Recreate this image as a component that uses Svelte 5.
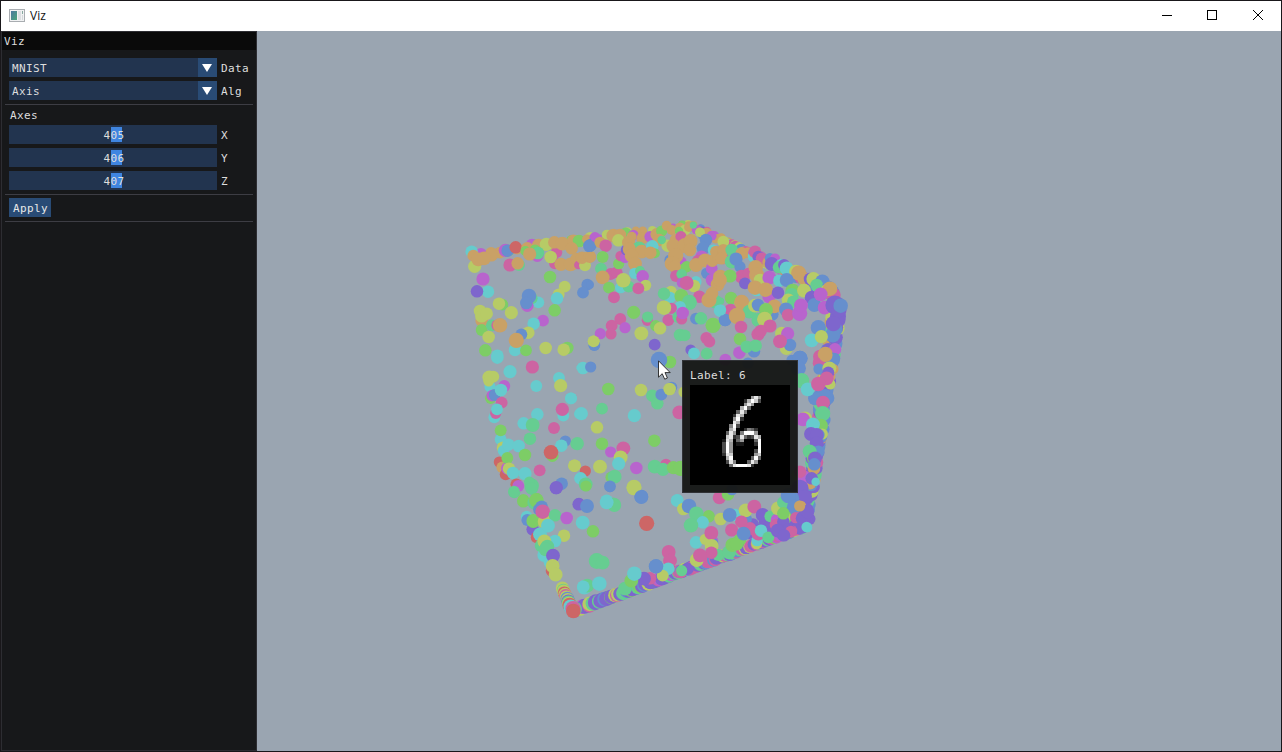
<script>
  const colors = {
    o: '#c9a166', t: '#66cbcd', y: '#b7cb66', p: '#cc64a2', m: '#b864cd',
    v: '#7e66cd', b: '#668fcd', g: '#7dcd66', e: '#66cd91', r: '#cd6666'
  };

  let seed = 17;
  function random() {
    seed = (seed * 16807) % 2147483647;
    return seed / 2147483647;
  }

  // Points crowded along one edge of the cube, farthest first.
  function edge(x1, y1, r1, x2, y2, r2, count, jx, jy, palette) {
    return Array.from({ length: count }, (_, i) => {
      const t = i / (count - 1);
      return {
        x: x1 + (x2 - x1) * t + (random() - 0.5) * jx,
        y: y1 + (y2 - y1) * t + (random() - 0.5) * jy,
        r: r1 + (r2 - r1) * t,
        c: colors[palette[Math.floor(random() * palette.length)]]
      };
    });
  }

  const edges = [
    ...edge(690, 225, 4, 482, 254, 6, 24, 4, 4, 'oomgy'),
    ...edge(688, 225, 4, 834, 293, 7.5, 85, 4, 4, 'oympbtpmoev'),
    ...edge(806, 518, 6, 836, 316, 8, 80, 7, 3, 'vvbbvvpbvvoeyb'),
    // Seen end-on, the bottom edge is a stack of discs that hide one another towards the right.
    ...edge(573, 610.5, 7.5, 804, 527, 6, 118, 2, 1, 'vvepvympevvpegvyb').reverse().reverse(),
    ...edge(745, 534, 6, 803, 512, 6, 34, 12, 16, 'vvvbvpvev')
  ];

  // Each cluster is measured on a grid three times finer than the view.
  const clusters = [
    { x: 460, y: 215, dots: `
      t35,110,18 y44,154,19 o40,122,17 o55,133,20 o94,120,19 o72,130,20 m136,106,19 b143,107,18 r167,97,18
      m216,90,18 o202,100,18 m232,122,18 o236,92,20 g225,105,16 g196,108,14 y259,88,19 e234,114,18 o209,117,19
      p150,150,19 e177,150,17 o173,145,18 p290,112,16 p285,145,17 o283,82,18 o307,86,20 o340,77,18 g357,78,18
      o335,100,18 y272,126,18 o303,148,19 o332,148,20 o350,132,18 p355,150,12 y375,151,17 o366,128,18 o389,125,18
      y390,68,16 o381,73,14 m405,68,16 b388,93,18 b405,80,14 o415,82,14 g270,186,18 b382,209,17 b369,233,17
      y314,215,17 y296,238,17 t291,250,18 g284,286,18 m69,192,19 t84,230,18 v51,229,18 t235,262,17 e215,250,17
      m202,272,18 b207,243,21 b199,264,18 g127,269,17 y117,266,18 y154,293,19 y60,288,18 o65,317,18 y65,303,19
      y80,296,18 g65,345,17 e96,331,17 p112,331,17 o120,331,21 y86,366,18 m249,317,17 t221,326,18 y205,353,18
      b184,358,17 t165,405,18 o169,376,22 g76,406,18 g198,406,17 t112,422,18 y257,399,18 g322,399,18 y311,404,18
      b403,390,17 y401,379,17` },
    { x: 590, y: 215, dots: `
      b2,90,18 m15,68,12 y50,60,14 g107,54,16 m130,60,15 m85,58,13 e92,70,15 o70,62,20 o90,60,18 y85,76,18
      o115,82,18 o125,65,14 o157,70,17 m180,65,16 o200,58,18 g215,48,16 o230,32,14 o207,75,18 o245,45,14 o270,38,15
      y285,45,16 g267,48,12 o297,36,14 m320,45,14 b338,60,14 e310,30,10 o350,55,16 m365,62,14 y330,52,14
      o30,82,16 p47,92,18 g38,126,17 e33,161,17 p62,177,17 p80,172,17 o2,126,15 g86,146,16 p92,123,15 m105,128,15
      v108,105,15 o116,82,18 e147,100,20 o118,102,19 o155,110,20 o125,122,20 t187,94,18 g195,115,14 o181,113,18
      y233,92,18 e215,75,12 o135,146,20 b240,135,16 m275,140,14 o258,75,18 p273,65,16 o250,92,20 o285,92,22
      o302,78,20 o257,122,22 o247,146,22 o300,105,18 g290,155,16 g280,162,15 m255,165,13 o254,155,18 p258,183,17
      e275,178,15 m275,203,14 t318,200,16 y312,213,18 p290,204,20 b348,75,18 b340,100,19 t370,105,16 m335,125,18
      p325,138,18 o318,150,20 o345,136,20 b350,175,16 m365,160,17 o367,137,18 o385,128,18 m400,130,17 o378,110,17
      m366,195,18 o391,186,21 o383,208,20 e376,260,20 p328,245,18 o357,255,22 o366,235,18 y400,80,17 o400,105,17
      t134,175,16 e150,168,14 m158,184,18 y167,211,16 t92,218,16 e116,215,17 p145,220,17 y100,196,21 o38,187,20
      g57,218,17 p72,247,17 b0,209,11 y243,230,17 t240,248,17 e222,236,18 g274,243,20 e298,262,22 t270,276,17
      p244,280,16 p235,315,17 e265,306,17 p275,312,16 y222,278,21 m278,294,18 b318,311,17 e333,310,18 g369,331,22
      b405,315,18 t390,287,18 g131,292,19 p172,316,16 e173,306,16 g197,332,16 y210,340,18 e270,360,18 e284,361,17
      p91,312,17 p65,332,17 p63,357,16 m105,338,16 y154,355,20 m31,356,16 b13,390,16 y11,379,17
      v194,389,17 p349,369,17 p358,380,17 v302,404,15 t312,415,17 e350,416,17` },
    { x: 720, y: 215, dots: `
      o5,130,18 e35,140,20 e35,105,18 o65,115,18 b60,155,16 b48,132,19 t100,125,16 o100,115,12 p105,110,18 v115,125,17
      p125,130,17 o145,142,17 b150,130,15 m165,130,14 v155,147,20 t185,150,18 e177,157,18 v192,150,17 t200,160,20
      y228,170,20 o236,174,22 o250,190,18 v270,192,18 y280,192,20 b307,200,21 e290,210,18 b325,215,18 y320,225,17
      o330,221,21 p65,185,20 p85,175,16 v75,205,17 t110,225,18 g30,183,19 o0,195,20 o107,157,21 o110,180,22 y120,195,18
      m148,188,20 t178,197,18 b200,195,20 g218,228,21 e215,240,20 y205,255,19 e220,260,18 o105,218,21 m147,245,19
      o137,224,21 v174,233,18 y252,227,20 v275,248,20 b283,270,20 m302,238,20 m314,278,20 v345,270,28 v357,285,22
      b362,272,21 g33,249,18 p32,285,18 e2,258,10 b16,315,18 t2,285,16 o65,262,22 e88,290,20 y105,272,20
      b114,270,18 b157,298,18 o163,274,20 g138,285,20 o51,303,24 e115,315,20 y134,313,22 p63,336,18 p150,333,19
      p114,358,19 p122,348,18 b198,283,20 p204,300,18 m239,295,22 m243,271,20 b345,343,22 v347,370,18
      b338,360,22 v340,326,22 b295,338,22 t275,376,20 y304,365,19 y185,355,19 m203,356,19 y199,400,19 b210,390,18 p180,379,20
      g60,372,18 m58,413,18 b102,409,18 e80,395,18 e107,392,18 m16,434,17 b84,444,16 b215,435,15 b240,430,22
      p300,425,20 p298,440,18 v325,405,20 m345,403,18 o316,418,22 b337,435,22` },
    { x: 460, y: 350, dots: `
      t150,65,19 t112,23,18 p217,51,19 t229,108,17 t297,84,17 y302,107,19 t333,145,17 t310,197,17 p307,178,19
      p282,234,17 t357,53,7 t357,192,14 t90,110,16 y88,82,20 y100,80,17 y86,94,15 m133,108,17 t112,125,17 g92,145,16
      m97,137,17 b104,135,17 t123,120,18 p125,158,17 t103,202,17 p107,190,16 t111,178,17 t232,193,18 t191,220,18
      e218,225,20 e210,266,18 t122,268,17 g122,241,17 y129,293,18 t130,302,16 t145,284,18 t176,288,18 g195,315,18
      r118,336,16 o127,352,17 r137,373,17 m142,355,18 g142,324,17 y147,356,18 t159,369,18 t195,371,19 p239,361,17
      e215,407,21 e208,395,15 e163,427,17 r169,403,17 m175,408,17 g190,450,17 g230,448,18 b316,273,16 t304,287,18
      g277,317,18 r273,307,21 y343,347,18 e348,282,16 t358,386,14 b305,401,18 v289,413,19` },
    { x: 570, y: 350, dots: `
      t39,54,18 b62,51,16 g300,36,18 b267,30,24 g115,117,18 y213,120,18 e247,137,18 e262,160,18 b274,134,17
      b305,112,16 y299,117,18 y342,126,16 p328,187,20 t3,145,17 t34,191,19 e96,176,17 t193,197,19 y81,232,18
      e22,281,19 g96,281,18 g253,272,18 m122,306,16 p160,295,20 y152,322,20 t146,341,19 m199,354,18 y14,347,18
      y90,350,20 r46,363,16 t32,385,18 e47,403,20 g124,382,17 e134,380,20 b120,409,17 y192,412,22 b214,440,20
      e254,350,20 p288,343,16 e279,358,19 g310,353,19 g332,355,22 t110,452,18 e130,460,17 v27,460,16 t322,451,18` },
    { x: 785, y: 355, dots: `
      b45,10,22 b40,40,22 p100,25,16 b102,42,16 b150,10,15 o145,42,15 y133,40,20 v130,52,17 o122,0,20 y136,88,15
      p125,70,20 b120,125,22 b90,130,20 e50,77,22 t68,103,20 p100,87,21 p114,143,20 b118,195,18 e113,176,22
      g108,212,20 y60,190,20 m54,193,20 t84,208,20 v78,237,20 y112,237,16 b100,240,18 v95,240,20 v95,265,20 b100,290,18
      e74,289,20 g85,310,18 p96,322,18 v90,310,20 o87,341,18 b88,328,18 y38,360,18 m58,368,20 p45,350,18 v80,370,18
      t92,380,12 v45,400,25 v60,425,20 b20,430,22 v65,465,20 o48,453,15 b20,460,20 g0,487,20 p40,487,16
      v68,485,16 t68,518,13 v45,515,22 p18,528,18` },
    { x: 500, y: 490, dots: `
      v168,-6,18 e42,5,17 e95,-4,18 g70,34,18 e103,38,20 g109,31,21 b118,58,18 b125,50,18 t80,80,17 v98,118,18
      b82,90,17 r110,142,17 g100,93,20 y135,95,21 p128,65,21 e165,76,18 m200,84,18 y192,137,18 t120,133,20
      t144,107,20 e125,167,20 t165,153,18 t133,195,20 y133,154,20 e142,170,20 e137,178,20 t150,217,18
      v159,197,20 r156,242,18 y158,228,20 y167,254,20 v236,43,18 b261,48,20 e343,45,20 t320,37,20 t248,98,20
      g279,124,18 e290,213,23 e308,218,20 r440,100,22 y401,-5,20 b424,21,20 b330,-8,14 g258,-12,16` },
    { x: 650, y: 485, dots: `
      p208,38,19 g234,28,18 b246,14,16 t81,47,18 y100,72,18 b117,63,21 g176,94,18 e139,86,21 t158,112,18 e123,121,21
      y212,102,18 t255,90,18 b239,90,20 b288,102,17 y287,76,20 p313,65,20 p274,110,18 p300,130,18 p245,135,19
      t138,172,18 m188,168,16 b190,174,14 y166,163,16 p184,144,20 y185,183,20 e205,210,17 p184,203,18 g270,164,18
      e237,202,20 g247,180,20 g260,176,20 b281,146,20 y320,176,16 t321,167,16 p325,146,20 t333,137,18 e355,157,17
      v338,90,20 e361,94,17 m380,104,17 p378,120,18 y384,70,20 e400,52,18 b415,32,22 b432,65,20 y405,95,16
      v400,110,18 p437,98,16 g400,85,18 v460,100,22 v472,80,20 o449,63,16 t470,126,15 v415,135,20 p423,140,17
      v383,137,20 v402,151,18 p56,201,20 p60,227,20 t55,251,18 y38,272,17 b18,244,21 p93,262,17 v113,251,18
      e95,257,16 y140,225,20 p150,211,20` },
    { x: 500, y: 490, dots: `
      t253,292,21 e262,287,20 t250,290,18 t298,281,21 p450,265,18 v432,266,20 e375,296,20 g394,272,20 t403,251,21
      b468,229,20 y187,294,19 e190,300,18 y191,303,19 r193,309,19 y195,313,19 p197,317,19 y199,321,19 b202,326,20
      y203,329,19 v205,334,20 e206,337,20 y207,341,20 r209,345,21 t212,350,21 e223,357,22 p219,356,22 r220,363,21` }
  ].map((cluster) => ({
    ...cluster,
    dots: cluster.dots.trim().split(/\s+/).map((item) => {
      const [x, y, r] = item.slice(1).split(',').map(Number);
      return { x, y, r, c: colors[item[0]] };
    })
  }));

  // Digit bitmap, 28 cells a side: row, first column, then brightness in tenths.
  const bitmap = [
    [3, 17, '696'], [4, 15, '27a83'], [5, 15, '696'], [6, 14, '7a4'], [7, 13, '495'], [8, 12, '297'],
    [9, 12, '6a2'], [10, 12, '97'], [11, 11, '5a3'], [12, 11, '790025420'], [13, 10, '49605aaa6'],
    [14, 10, '8923942397'], [15, 9, '1970460004a'], [16, 9, '3a60110002a'], [17, 9, '3a60000000a'],
    [18, 9, '3a60000003a'], [19, 9, '29800000068'], [20, 10, '7a000004a4'], [21, 10, '395000496'], [22, 11, '49aaa92']
  ].flatMap(([row, start, cells]) =>
    [...cells].map((value, i) => {
      const level = Math.round((value === 'a' ? 1 : Number(value) / 10) * 255);
      return { x: start + i, y: row, fill: `rgb(${level},${level},${level})` };
    })
  );

  const selects = [['MNIST', 'Data'], ['Axis', 'Alg']];
  const axes = [['405', 'X'], ['406', 'Y'], ['407', 'Z']];
</script>

<div class="window">
  <header>
    <svg class="appicon" viewBox="0 0 16 13" width="16" height="13">
      <defs><linearGradient id="pane" x1="0" y1="0" x2="1" y2="1"><stop offset="0" stop-color="#4b78a0" /><stop offset="1" stop-color="#4aa57a" /></linearGradient></defs>
      <rect x=".5" y=".5" width="15" height="12" fill="#f1f2f3" stroke="#a9adb1" />
      <rect x="2" y="2" width="6" height="9" fill="url(#pane)" />
      <rect x="9" y="2" width="3" height="9" fill="#dcdfe2" />
      <rect x="13" y="2" width="1" height="3" fill="#87a9a0" />
      <rect x="13" y="6" width="1" height="5" fill="#d5d8da" />
    </svg>
    <span class="title">Viz</span>
    <svg class="controls" width="102" height="11" viewBox="0 0 102 11" fill="none" stroke="#000">
      <path d="M0 5.5H10" />
      <rect x="45.5" y=".5" width="9" height="9" />
      <path d="M91 0L101 10M101 0L91 10" />
    </svg>
  </header>
  <main>
    <aside>
      <div class="caption">Viz</div>
      <div class="fields">
        {#each selects as [value, label]}
          <div class="row">
            <div class="select"><span>{value}</span><i><svg width="10" height="8" viewBox="0 0 10 8"><path d="M0 0H10L5 8Z" fill="#fff" /></svg></i></div>
            <span class="label">{label}</span>
          </div>
        {/each}
      </div>
      <hr />
      <div class="heading">Axes</div>
      <div class="sliders">
        {#each axes as [value, label]}
          <div class="row">
            <div class="slider"><b></b><span>{value}</span></div>
            <span class="label">{label}</span>
          </div>
        {/each}
      </div>
      <hr />
      <button>Apply</button>
      <hr />
    </aside>
    <section>
      <svg class="cloud" viewBox="257 31 1024 720" width="1024" height="720">
        {#each edges as dot}<circle cx={dot.x} cy={dot.y} r={dot.r} fill={dot.c} />{/each}
        {#each clusters as cluster}
          <g transform="translate({cluster.x} {cluster.y}) scale(.33333)">
            {#each cluster.dots as dot}<circle cx={dot.x} cy={dot.y} r={dot.r + 0.8} fill={dot.c} />{/each}
          </g>
        {/each}
      </svg>
      <div class="tooltip">
        <p>Label: 6</p>
        <svg width="100" height="100" viewBox="0 0 28 28" shape-rendering="crispEdges">
          <rect width="28" height="28" fill="#000" />
          {#each bitmap as cell}<rect x={cell.x} y={cell.y} width="1" height="1" fill={cell.fill} />{/each}
        </svg>
      </div>
      <svg class="cursor" width="13" height="20" viewBox="0 0 13 20">
        <path d="M.5 .8V17.2L4.2 13.7L6.7 19.2L9.4 18L7 12.6H12.2Z" fill="#fff" stroke="#222" stroke-width=".9" />
      </svg>
    </section>
  </main>
</div>

<style>
  :global(body) { margin: 0; overflow: hidden; }
  .window {
    box-sizing: border-box; width: 1282px; height: 752px; border: 1px solid #19171a;
    display: flex; flex-direction: column; background: #9aa5b1;
  }
  header { height: 30px; flex: none; background: #fff; display: flex; align-items: center; padding: 0 17px 0 8px; }
  .appicon { margin-top: -2px; }
  .title { font: 12px/16px "Open Sans", "Noto Sans", sans-serif; margin-left: 5px; color: #111; }
  .controls { margin-left: auto; margin-top: -1px; }
  main { flex: 1; min-height: 0; display: flex; }
  aside {
    box-sizing: border-box; width: 256px; border: 1px solid #2d2d32; background: #17181a;
    color: #dedede; font: 11px/13px "DejaVu Sans Mono", monospace; letter-spacing: .378px;
  }
  .caption { height: 18px; line-height: 20px; background: #0a0a0a; padding-left: 2px; }
  .fields { padding: 8px 0 4px 7px; display: grid; gap: 4px; }
  .row { display: flex; height: 19px; line-height: 21px; }
  .label { margin-left: 4px; }
  .select { width: 208px; display: flex; background: #22344f; }
  .select span { flex: 1; padding-left: 3px; }
  .select i { width: 19px; background: #294b75; display: grid; place-items: center; }
  .select svg { display: block; margin-right: 1px; }
  hr { margin: 0 3px; border: 0; height: 1px; background: #3d3d44; }
  .heading { padding: 4px 0 3px 8px; }
  .sliders { padding: 0 0 4px 7px; display: grid; gap: 4px; }
  .slider { width: 208px; height: 19px; background: #22344f; display: grid; grid-template-rows: 19px; justify-items: center; align-items: start; }
  .slider b, .slider span { grid-area: 1 / 1; }
  .slider b { width: 11px; height: 15px; margin: 2px 0 0 7px; background: #3f85e0; }
  .slider span { z-index: 1; margin-left: 2px; }
  button {
    display: block; width: 42px; height: 19px; margin: 3px 0 4px 7px; padding: 1px 0 0 1px; border: 0;
    background: #294b75; color: #e8e8e8; font: inherit; letter-spacing: inherit; line-height: 19px;
  }
  section { position: relative; width: 1024px; background: #9aa5b1; }
  .cloud { display: block; }
  .tooltip {
    position: absolute; left: 425px; top: 329px; box-sizing: border-box; width: 116px; height: 133px;
    padding: 8px 7px 7px; border: 1px solid #303236; background: rgba(22, 23, 22, .96);
    color: #dedede; font: 11px/13px "DejaVu Sans Mono", monospace; letter-spacing: .378px;
  }
  .tooltip p { margin: 0 0 3px; }
  .tooltip svg { display: block; }
  .cursor { position: absolute; left: 401px; top: 329px; }
</style>
